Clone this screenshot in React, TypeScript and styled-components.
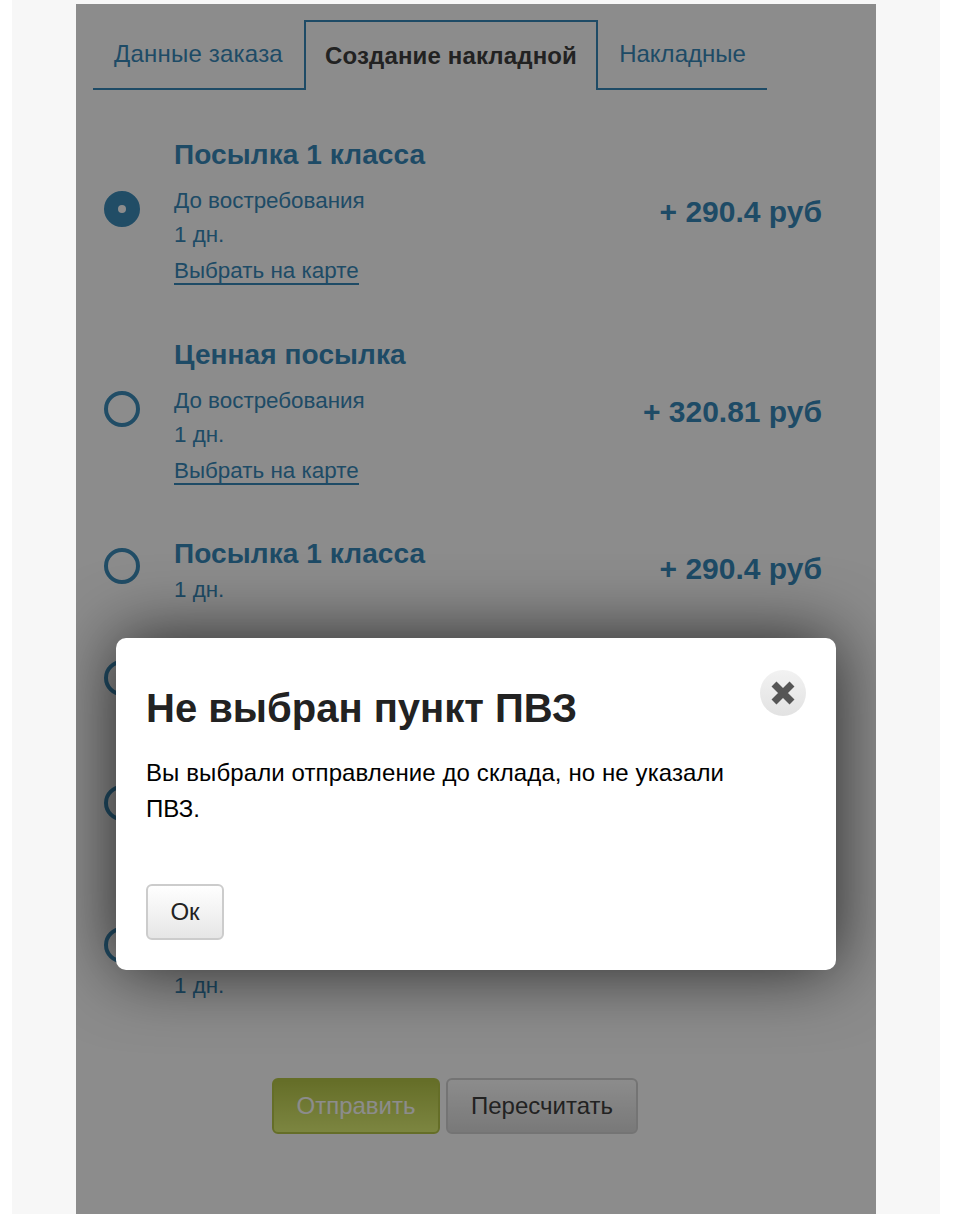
import React from 'react';
import styled, { createGlobalStyle } from 'styled-components';

const Global = createGlobalStyle`
  html, body { margin: 0; height: 100%; overflow: hidden; background: #fff; }
  body { font-family: "Liberation Sans", Arial, sans-serif; }
  #root { height: 100%; }
`;

const Page = styled.div`
  box-sizing: border-box;
  height: 1214px;
  margin: 0 14px 0 12px;
  padding-top: 4px;
  background: #f7f7f7;
  display: flex;
  justify-content: center;
`;

const Card = styled.main`
  position: relative;
  width: 800px;
  height: 1210px;
  background: #fff;
  overflow: hidden;
  box-sizing: border-box;
  padding: 16px 17px 0;
`;

const Tabs = styled.nav`
  display: flex;
  height: 70px;
`;

const Tab = styled.div<{ $active?: boolean; $w: number; $spacing?: number }>`
  box-sizing: border-box;
  width: ${p => p.$w}px;
  display: flex;
  align-items: center;
  justify-content: center;
  font-size: 24px;
  font-weight: ${p => (p.$active ? 700 : 400)};
  letter-spacing: ${p => p.$spacing ?? 0}px;
  color: ${p => (p.$active ? '#3e3e3e' : '#3889ba')};
  border: 2px solid #3889ba;
  ${p => (p.$active ? 'border-bottom: 0;' : 'border-width: 0 0 2px;')}
`;

const Rows = styled.div`
  padding-top: 21px;
  margin-right: 37px;
`;

const Row = styled.div<{ $h: number }>`
  height: ${p => p.$h}px;
  display: flex;
  align-items: center;
`;

const Radio = styled.span<{ $checked?: boolean }>`
  box-sizing: border-box;
  flex: none;
  width: 36px;
  height: 36px;
  margin: 0 34px 4px 11px;
  border-radius: 50%;
  border: 4px solid #3c8cbb;
  background: ${p => (p.$checked ? '#3c8cbb' : 'transparent')};
  display: flex;
  align-items: center;
  justify-content: center;
  &::after {
    content: '';
    display: ${p => (p.$checked ? 'block' : 'none')};
    width: 8px;
    height: 8px;
    border-radius: 50%;
    background: #fff;
  }
`;

const Info = styled.div<{ $offset?: number }>`
  flex: 1;
  display: flex;
  flex-direction: column;
  align-items: flex-start;
  padding-top: ${p => p.$offset ?? 0}px;
`;

const Title = styled.div<{ $tight?: boolean }>`
  font-size: 28px;
  letter-spacing: 0.1px;
  font-weight: 700;
  line-height: 36px;
  color: #3889ba;
  margin: ${p => (p.$tight ? '7px 0 1px' : '0 0 11px')};
`;

const Detail = styled.div`
  font-size: 22.4px;
  line-height: 34px;
  color: #3889ba;
`;

const MapLink = styled.a`
  font-size: 22.4px;
  line-height: 24px;
  margin-top: 7px;
  color: #3889ba;
  border-bottom: 2px solid #3889ba;
`;

const Price = styled.div`
  font-size: 30px;
  font-weight: 700;
  color: #3889ba;
  white-space: nowrap;
  padding-top: 2px;
`;

const Actions = styled.div`
  display: flex;
  justify-content: center;
  gap: 6px;
  margin-top: 59px;
  padding-right: 42px;
`;

const ActionButton = styled.button<{ $primary?: boolean; $w: number }>`
  box-sizing: border-box;
  width: ${p => p.$w}px;
  height: 56px;
  border-radius: 6px;
  font-family: inherit;
  font-size: 24px;
  padding: 0;
  color: ${p => (p.$primary ? '#fff' : '#3e3e3e')};
  border: 2px solid ${p => (p.$primary ? '#b9c94a' : '#d4d4d4')};
  background: ${p =>
    p.$primary
      ? 'linear-gradient(#b8c849, #e2f376)'
      : 'linear-gradient(#ffffff, #dcdcdc)'};
`;

const Overlay = styled.div`
  position: absolute;
  inset: 0;
  background: rgba(0, 0, 0, 0.45);
  display: flex;
  justify-content: center;
  align-items: flex-start;
  padding-top: 634px;
`;

const Modal = styled.section`
  position: relative;
  box-sizing: border-box;
  width: 720px;
  height: 332px;
  padding: 46px 30px 0;
  border-radius: 10px;
  background: #fff;
  box-shadow: 0 0 70px rgba(0, 0, 0, 0.72);
`;

const ModalTitle = styled.h2`
  margin: 0;
  font-size: 40px;
  line-height: 48px;
  font-weight: 700;
  color: #222;
`;

const ModalText = styled.p`
  margin: 23px 0 0;
  width: 600px;
  font-size: 24px;
  letter-spacing: 0.1px;
  line-height: 36px;
  color: #000;
`;

const OkButton = styled.button`
  display: block;
  box-sizing: border-box;
  width: 78px;
  height: 56px;
  margin-top: 57px;
  padding: 0;
  border: 2px solid #ccc;
  border-radius: 6px;
  font-family: inherit;
  font-size: 24px;
  color: #222;
  background: linear-gradient(#fff, #e6e6e6);
`;

const CloseButton = styled.button`
  position: absolute;
  top: 32px;
  right: 30px;
  width: 46px;
  height: 46px;
  padding: 0;
  border: 0;
  border-radius: 50%;
  background: linear-gradient(#f2f2f2, #e2e2e2);
  display: flex;
  align-items: center;
  justify-content: center;
`;

type RowData = {
  h: number;
  title?: string;
  tight?: boolean;
  lines?: string[];
  link?: boolean;
  price?: string;
  checked?: boolean;
  offset?: number;
};

const rows: RowData[] = [
  { h: 200, title: 'Посылка 1 класса', lines: ['До востребования', '1 дн.'], link: true, price: '+ 290.4 руб', checked: true },
  { h: 200, title: 'Ценная посылка', lines: ['До востребования', '1 дн.'], link: true, price: '+ 320.81 руб' },
  { h: 114, tight: true, title: 'Посылка 1 класса', lines: ['1 дн.'], price: '+ 290.4 руб' },
  { h: 110 },
  { h: 140 },
  { h: 144, lines: ['1 дн.'], offset: 78 },
];

export default function App() {
  return (
    <>
      <Global />
      <Page>
        <Card>
          <Tabs>
            <Tab $w={211} $spacing={0.2}>Данные заказа</Tab>
            <Tab $w={294} $active $spacing={0.15}>Создание накладной</Tab>
            <Tab $w={169}>Накладные</Tab>
          </Tabs>
          <Rows>
            {rows.map((r, i) => (
              <Row key={i} $h={r.h}>
                <Radio $checked={r.checked} />
                <Info $offset={r.offset}>
                  {r.title && <Title $tight={r.tight}>{r.title}</Title>}
                  {r.lines?.map(l => (
                    <Detail key={l}>{l}</Detail>
                  ))}
                  {r.link && <MapLink>Выбрать на карте</MapLink>}
                </Info>
                {r.price && <Price>{r.price}</Price>}
              </Row>
            ))}
          </Rows>
          <Actions>
            <ActionButton $primary $w={168}>Отправить</ActionButton>
            <ActionButton $w={192}>Пересчитать</ActionButton>
          </Actions>
          <Overlay>
            <Modal>
              <CloseButton aria-label="Закрыть">
                <svg width="24" height="24" viewBox="0 0 24 24">
                  <path d="M3 3 L21 21 M21 3 L3 21" stroke="#555" strokeWidth="7" fill="none" />
                </svg>
              </CloseButton>
              <ModalTitle>Не выбран пункт ПВЗ</ModalTitle>
              <ModalText>Вы выбрали отправление до склада, но не указали ПВЗ.</ModalText>
              <OkButton>Ок</OkButton>
            </Modal>
          </Overlay>
        </Card>
      </Page>
    </>
  );
}
